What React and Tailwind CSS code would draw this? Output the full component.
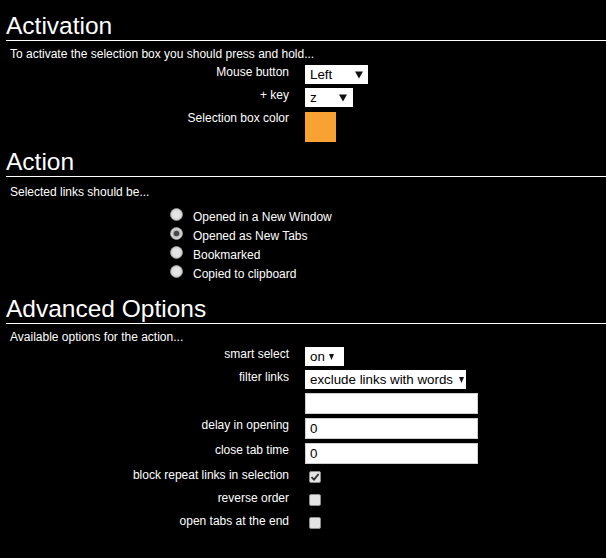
import React from 'react';

function Arrow({ small }) {
  if (small) {
    return (
      <svg width="5" height="6" viewBox="0 0 5 6" className="shrink-0">
        <path d="M0 0h5L2.5 6z" fill="#111" />
      </svg>
    );
  }
  return (
    <svg width="8" height="8" viewBox="0 0 8 8" className="shrink-0">
      <path d="M0 0.5h8L4 7.5z" fill="#111" />
    </svg>
  );
}

function Radio({ checked }) {
  return (
    <svg width="13" height="13" viewBox="0 0 13 13" className="mt-[2px] shrink-0">
      <circle cx="6.5" cy="6.5" r="6" fill="#d6d6d6" stroke="#9a9a9a" strokeWidth="0.8" />
      <circle cx="6.5" cy="6.5" r="4" fill={checked ? '#bdbdbd' : '#e4e4e4'} />
      {checked && <circle cx="6.5" cy="6.5" r="2.8" fill="#474747" />}
    </svg>
  );
}

function Checkbox({ checked }) {
  return (
    <div className="flex h-[19px] items-start pl-[4px] pt-[3px]">
      <div className="flex h-[12px] w-[12px] items-center justify-center rounded-[2px] border border-[#8d8d8d] bg-[#e3e3e3]">
        {checked && (
          <svg width="10" height="10" viewBox="0 0 10 10">
            <path d="M1.5 5.2 4 7.6 8.6 2" fill="none" stroke="#2e2e2e" strokeWidth="1.8" />
          </svg>
        )}
      </div>
    </div>
  );
}

function Row({ label, children }) {
  return (
    <div className="flex items-start">
      <div className="w-[289px] shrink-0 text-right leading-[14px]">{label}</div>
      <div className="ml-[16px]">{children}</div>
    </div>
  );
}

function Heading({ children, className }) {
  return (
    <h1 className={`ml-[6px] border-b border-white text-[24.5px] leading-[28px] ${className}`}>
      {children}
    </h1>
  );
}

export default function App() {
  const radios = [
    { label: 'Opened in a New Window', checked: false },
    { label: 'Opened as New Tabs', checked: true },
    { label: 'Bookmarked', checked: false },
    { label: 'Copied to clipboard', checked: false },
  ];

  const inputClass =
    'block h-[21px] w-[173px] border border-[#cfcfcf] bg-white px-[4px] text-[13.33px] text-black outline-none';

  return (
    <div className="h-[558px] w-[606px] overflow-hidden bg-black text-[12px] text-white font-['Liberation_Sans',Arial,sans-serif]">
      {/* Activation */}
      <Heading className="pt-[12px]">Activation</Heading>
      <p className="ml-[10px] mt-[6px] leading-[14px]">To activate the selection box you should press and hold...</p>
      <div className="mt-[4px] flex flex-col gap-[4px]">
        <Row label="Mouse button">
          <div className="flex h-[19px] w-[63px] items-center justify-between bg-white pl-[5px] pr-[5px] text-[13.33px] text-black">
            <span>Left</span>
            <Arrow />
          </div>
        </Row>
        <Row label="+ key">
          <div className="flex h-[19px] w-[48px] items-center justify-between bg-white pl-[5px] pr-[6px] text-[13.33px] text-black">
            <span>z</span>
            <Arrow />
          </div>
        </Row>
        <Row label="Selection box color">
          <div className="mt-[1px] h-[30px] w-[31px] bg-[#f9a234]" />
        </Row>
      </div>

      {/* Action */}
      <Heading className="mt-[6px]">Action</Heading>
      <p className="ml-[10px] mt-[8px] leading-[14px]">Selected links should be...</p>
      <div className="ml-[170px] mt-[7px] flex flex-col">
        {radios.map((r) => (
          <div key={r.label} className="flex h-[19px] items-start">
            <Radio checked={r.checked} />
            <span className="ml-[10px] mt-[4px] leading-[14px]">{r.label}</span>
          </div>
        ))}
      </div>

      {/* Advanced Options */}
      <Heading className="mt-[13px]">Advanced Options</Heading>
      <p className="ml-[10px] mt-[6px] leading-[14px]">Available options for the action...</p>
      <div className="mt-[3px] flex flex-col gap-[4px]">
        <Row label="smart select">
          <div className="flex h-[19px] w-[39px] items-center justify-between bg-white pl-[5px] pr-[10px] text-[13.33px] text-black">
            <span>on</span>
            <Arrow small />
          </div>
        </Row>
        <Row label="filter links">
          <div className="flex h-[19px] w-[161px] items-center justify-between bg-white pl-[5px] pr-[2px] text-[13.33px] text-black">
            <span>exclude links with words</span>
            <Arrow small />
          </div>
        </Row>
        <Row label="">
          <input readOnly defaultValue="" className={inputClass} />
        </Row>
        <Row label="delay in opening">
          <input readOnly defaultValue="0" className={inputClass} />
        </Row>
        <Row label="close tab time">
          <input readOnly defaultValue="0" className={inputClass} />
        </Row>
        <Row label="block repeat links in selection">
          <Checkbox checked />
        </Row>
        <Row label="reverse order">
          <Checkbox />
        </Row>
        <Row label="open tabs at the end">
          <Checkbox />
        </Row>
      </div>
    </div>
  );
}
